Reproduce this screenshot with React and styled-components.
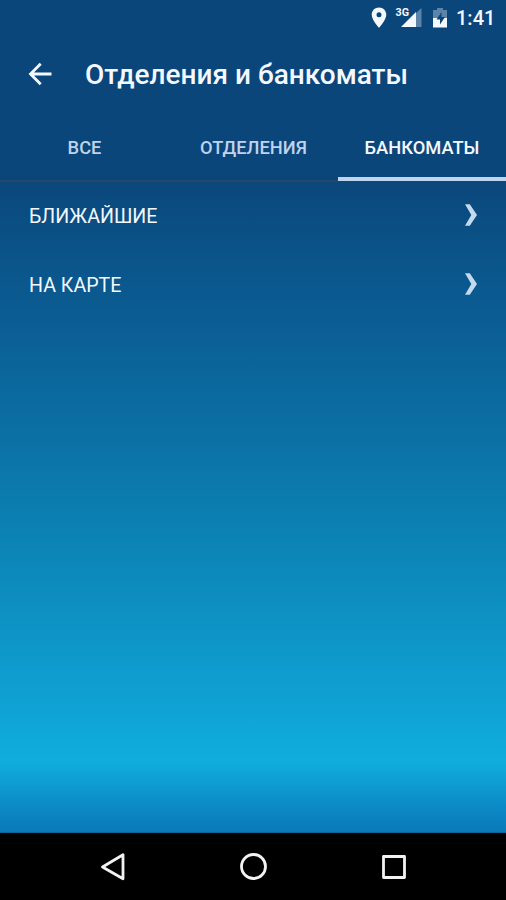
import { useState } from 'react'
import styled, { createGlobalStyle } from 'styled-components'

const GlobalStyle = createGlobalStyle`
  * {
    box-sizing: border-box;
  }

  body {
    margin: 0;
    background: #000;
    font-family: Roboto, 'Noto Sans', sans-serif;
  }
`

const Screen = styled.div`
  display: flex;
  flex-direction: column;
  width: 506px;
  height: 900px;
  color: #f4f8ff;
  overflow: hidden;
`

const Header = styled.header`
  background: #0b467b;
`

const StatusBar = styled.div`
  display: flex;
  justify-content: flex-end;
  height: 36px;
  padding-right: 11px;
`

const StatusIcons = styled.svg`
  width: 86px;
  height: 36px;
`

const Clock = styled.time`
  width: 39px;
  font-size: 20px;
  font-weight: 500;
  line-height: 37px;
  white-space: nowrap;
`

const TitleBar = styled.div`
  display: flex;
  align-items: center;
  gap: 33px;
  height: 77px;
  padding-left: 28px;
`

const BackButton = styled.button`
  display: flex;
  padding: 0 0 2px;
  border: 0;
  background: none;
  color: inherit;
`

const Title = styled.h1`
  margin: 0;
  padding-top: 1px;
  font-size: 28px;
  font-weight: 500;
  line-height: 36px;
  white-space: nowrap;
`

const Tabs = styled.nav`
  display: grid;
  grid-template-columns: 169px 169px 168px;
  height: 69px;
`

const Tab = styled.button`
  padding: ${({ $active }) => ($active ? '4px 0 0' : '4px 0 3px')};
  margin-bottom: ${({ $active }) => ($active ? '1px' : '0')};
  border: 0;
  border-bottom: ${({ $active }) => ($active ? '4px solid #bfd4ef' : '2px solid #26476a')};
  background: none;
  color: ${({ $active }) => ($active ? '#f4f8ff' : '#bfd3ec')};
  font-family: inherit;
  font-size: 18.3px;
  font-weight: 500;
  white-space: nowrap;
`

const Content = styled.main`
  flex: 1;
  background: linear-gradient(
    #0b477b 0,
    #0a5287 60px,
    #0a5f96 150px,
    #0b6fa3 245px,
    #0c85b7 370px,
    #0f9dcf 498px,
    #10addd 580px,
    #0b86c4 630px,
    #0b79b8 650px,
    #07547f 651px
  );
`

const Row = styled.div`
  display: flex;
  align-items: center;
  justify-content: space-between;
  height: 69px;
  padding: 0 28px 3px 29px;
  font-size: 19.6px;
`

const RowLabel = styled.span`
  padding-top: 3px;
`

const Chevron = styled.svg`
  width: 14px;
  height: 22px;
`

const NavBar = styled.footer`
  display: flex;
  align-items: center;
  justify-content: space-between;
  height: 67px;
  padding: 0 98px 0 99px;
  background: #000;
`

const NavIcon = styled.svg`
  width: 28px;
  height: 28px;
  fill: none;
  stroke: #f2f2f2;
  stroke-width: 2.8;
  stroke-linejoin: round;
`

const tabs = ['ВСЕ', 'ОТДЕЛЕНИЯ', 'БАНКОМАТЫ']
const rows = ['БЛИЖАЙШИЕ', 'НА КАРТЕ']

function StatusGlyphs() {
  return (
    <StatusIcons viewBox="370 0 86 36" fill="#f4f8ff">
      <path
        fillRule="evenodd"
        d="M379 7.500c-4.200 0-7.300 3.200-7.300 7.200 0 5.300 7.300 13 7.300 13s7.300-7.700 7.300-13c0-4-3.100-7.200-7.300-7.200zm0 4.700a2.500 2.500 0 1 1 0 5 2.500 2.500 0 0 1 0-5z"
      />
      <path d="M416 13l5.500-5v19H416z" opacity="0.35" />
      <path d="M401 27l15-15v15z" />
      <text x="395.500" y="16" fontSize="11" fontWeight="700" textLength="13.500" lengthAdjust="spacingAndGlyphs">
        3G
      </text>
      <path d="M433 18v-8h4V8h6v2h4v8z" opacity="0.35" />
      <path d="M433 18h14v9.500h-14z" />
      <path d="M441.500 12l-5 7.500h3.500v5l5-7.500h-3.500z" fill="#0b467b" />
    </StatusIcons>
  )
}

function App() {
  const [activeTab, setActiveTab] = useState(2)

  return (
    <Screen>
      <GlobalStyle />
      <Header>
        <StatusBar>
          <StatusGlyphs />
          <Clock>1:41</Clock>
        </StatusBar>
        <TitleBar>
          <BackButton type="button" aria-label="Назад">
            <svg width="24" height="24" viewBox="0 0 24 24" fill="none" stroke="currentColor" strokeWidth="2.800">
              <path d="M23.500 12H3M12.700 1.800L2.500 12l10.200 10.200" />
            </svg>
          </BackButton>
          <Title>Отделения и банкоматы</Title>
        </TitleBar>
        <Tabs>
          {tabs.map((label, index) => (
            <Tab key={label} type="button" $active={index === activeTab} onClick={() => setActiveTab(index)}>
              {label}
            </Tab>
          ))}
        </Tabs>
      </Header>
      <Content>
        {rows.map((label) => (
          <Row key={label}>
            <RowLabel>{label}</RowLabel>
            <Chevron viewBox="0 0 14 22" fill="#c3daee">
              <path d="M1 0.300h4.800L13 11 5.800 21.700H1L7.300 11z" />
            </Chevron>
          </Row>
        ))}
      </Content>
      <NavBar>
        <NavIcon viewBox="0 0 28 28">
          <path d="M24 1.800v24L3.500 14z" />
        </NavIcon>
        <NavIcon viewBox="0 0 28 28">
          <circle cx="13.500" cy="13.500" r="12" />
        </NavIcon>
        <NavIcon viewBox="0 0 28 28">
          <rect x="3.500" y="3.500" width="21" height="21" />
        </NavIcon>
      </NavBar>
    </Screen>
  )
}

export default App
